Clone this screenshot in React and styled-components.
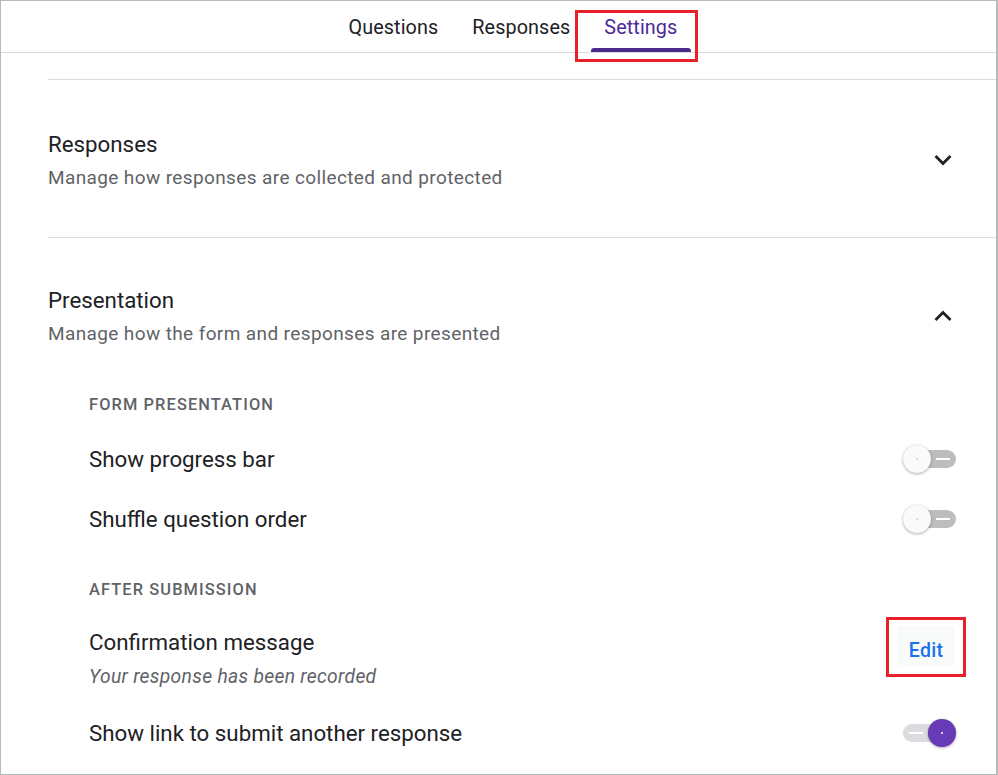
import React from "react";
import styled, { createGlobalStyle } from "styled-components";

const Global = createGlobalStyle`
  html, body { margin: 0; padding: 0; background: #ffffff; }
  * { box-sizing: border-box; }
`;

const Frame = styled.div`
  width: 998px;
  height: 775px;
  border: 1px solid #b2bcb8;
  border-right-width: 2px;
  overflow: hidden;
  background: #fff;
  font-family: Roboto, "Liberation Sans", Arial, sans-serif;
  color: #202124;
`;

const Header = styled.div`
  height: 52px;
  border-bottom: 1px solid #dadce0;
  display: flex;
  align-items: stretch;
  padding-left: 334px;
  gap: 7px;
`;

const Tab = styled.div`
  position: relative;
  display: flex;
  align-items: center;
  padding: 2px 13.5px 0;
  font-size: 19.8px;
  font-weight: 400;
  letter-spacing: 0.1px;
  color: ${(p) => (p.$active ? "#4c2a97" : "#202124")};
`;

const TabBar = styled.span`
  position: absolute;
  left: 0;
  right: 0;
  bottom: 0;
  height: 4px;
  border-radius: 3px 3px 0 0;
  background: #4b2a8e;
`;

const Highlight = styled.span`
  position: absolute;
  border: 3px solid #e8202a;
  pointer-events: none;
  left: ${(p) => p.$l}px;
  top: ${(p) => p.$t}px;
  width: ${(p) => p.$w}px;
  height: ${(p) => p.$h}px;
`;

const Content = styled.div`
  padding-left: 47px;
  padding-top: 26px;
`;

const Section = styled.section`
  border-top: 1px solid #dadce0;
  padding: ${(p) => (p.$open ? "48px 0 0" : "50px 0 47px")};
`;

const SectionHead = styled.div`
  display: flex;
  align-items: center;
  justify-content: space-between;
  padding-right: 44px;
`;

const TitleBlock = styled.div`
  display: flex;
  flex-direction: column;
  gap: 8px;
`;

const Title = styled.div`
  font-size: 22.3px;
  line-height: 28px;
  color: #202124;
`;

const Subtitle = styled.div`
  font-size: 19px;
  line-height: 24px;
  letter-spacing: 0.38px;
  color: #5f6368;
`;

const Chevron = styled.svg`
  width: 18px;
  height: 12px;
  display: block;
`;

const SubPanel = styled.div`
  padding-left: 41px;
  padding-right: 40px;
  display: flex;
  flex-direction: column;
`;

const Label = styled.div`
  font-size: 16.4px;
  line-height: 20px;
  font-weight: 500;
  letter-spacing: 1.1px;
  color: #5f6368;
  margin-top: ${(p) => p.$mt}px;
`;

const Row = styled.div`
  display: flex;
  align-items: ${(p) => p.$align || "center"};
  justify-content: space-between;
  margin-top: ${(p) => p.$mt}px;
`;

const ItemText = styled.div`
  display: flex;
  flex-direction: column;
  gap: 9px;
`;

const ItemTitle = styled.div`
  font-size: 22.3px;
  line-height: 28px;
  color: #202124;
`;

const ItemNote = styled.div`
  font-size: 19.3px;
  line-height: 24px;
  font-style: italic;
  letter-spacing: 0.3px;
  color: #5f6368;
`;

const Switch = styled.div`
  position: relative;
  width: 53px;
  height: 30px;
  flex-shrink: 0;
`;

const Track = styled.span`
  position: absolute;
  top: 6px;
  height: 18px;
  border-radius: 9px;
  left: ${(p) => (p.$on ? "0" : "6px")};
  right: ${(p) => (p.$on ? "6px" : "0")};
  background: ${(p) => (p.$on ? "#dcdce0" : "#bdbdbd")};
  &::after {
    content: "";
    position: absolute;
    top: 8px;
    height: 2px;
    width: 14px;
    background: #fff;
    ${(p) => (p.$on ? "left: 6px;" : "right: 6px;")}
  }
`;

const Thumb = styled.span`
  position: absolute;
  top: 1px;
  width: 28px;
  height: 28px;
  border-radius: 50%;
  left: ${(p) => (p.$on ? "25px" : "0")};
  background: ${(p) => (p.$on ? "#673ab7" : "#fafafa")};
  box-shadow: 0 1px 3px rgba(0, 0, 0, 0.3), 0 0 1px rgba(0, 0, 0, 0.15);
  &::after {
    content: "";
    position: absolute;
    left: 13px;
    top: 13px;
    width: 2px;
    height: 2px;
    border-radius: 1px;
    background: ${(p) => (p.$on ? "#fff" : "#d0d0d0")};
  }
`;

const EditWrap = styled.div`
  position: relative;
  margin-right: 1px;
  margin-top: -2px;
`;

const EditButton = styled.button`
  width: 58px;
  height: 41px;
  border: none;
  border-radius: 4px;
  background: #f9fbfb;
  color: #1a73e8;
  font-family: Roboto, "Liberation Sans", Arial, sans-serif;
  font-size: 19.5px;
  font-weight: 500;
  letter-spacing: 0.3px;
  padding: 7px 0 0;
  cursor: pointer;
`;

function ChevronIcon({ up }) {
  return (
    <Chevron viewBox="0 0 18 12">
      <polyline
        points={up ? "1.5,10 9,2.5 16.5,10" : "1.5,2 9,9.5 16.5,2"}
        fill="none"
        stroke="#202124"
        strokeWidth="2.8"
      />
    </Chevron>
  );
}

function Toggle({ on }) {
  return (
    <Switch>
      <Track $on={on} />
      <Thumb $on={on} />
    </Switch>
  );
}

export default function App() {
  return (
    <>
      <Global />
      <Frame>
        <Header>
          <Tab>Questions</Tab>
          <Tab>Responses</Tab>
          <Tab $active>
            Settings
            <TabBar />
            <Highlight $l={-16} $t={9} $w={123} $h={52} />
          </Tab>
        </Header>
        <Content>
          <Section>
            <SectionHead>
              <TitleBlock>
                <Title>Responses</Title>
                <Subtitle>Manage how responses are collected and protected</Subtitle>
              </TitleBlock>
              <ChevronIcon />
            </SectionHead>
          </Section>
          <Section $open>
            <SectionHead>
              <TitleBlock>
                <Title>Presentation</Title>
                <Subtitle>Manage how the form and responses are presented</Subtitle>
              </TitleBlock>
              <ChevronIcon up />
            </SectionHead>
            <SubPanel>
              <Label $mt={49}>FORM PRESENTATION</Label>
              <Row $mt={29}>
                <ItemTitle>Show progress bar</ItemTitle>
                <Toggle />
              </Row>
              <Row $mt={30}>
                <ItemTitle>Shuffle question order</ItemTitle>
                <Toggle />
              </Row>
              <Label $mt={46}>AFTER SUBMISSION</Label>
              <Row $mt={28} $align="flex-start">
                <ItemText>
                  <ItemTitle>Confirmation message</ItemTitle>
                  <ItemNote>Your response has been recorded</ItemNote>
                </ItemText>
                <EditWrap>
                  <EditButton>Edit</EditButton>
                  <Highlight $l={-11} $t={-9} $w={80} $h={60} />
                </EditWrap>
              </Row>
              <Row $mt={29}>
                <ItemTitle>Show link to submit another response</ItemTitle>
                <Toggle on />
              </Row>
            </SubPanel>
          </Section>
        </Content>
      </Frame>
    </>
  );
}
